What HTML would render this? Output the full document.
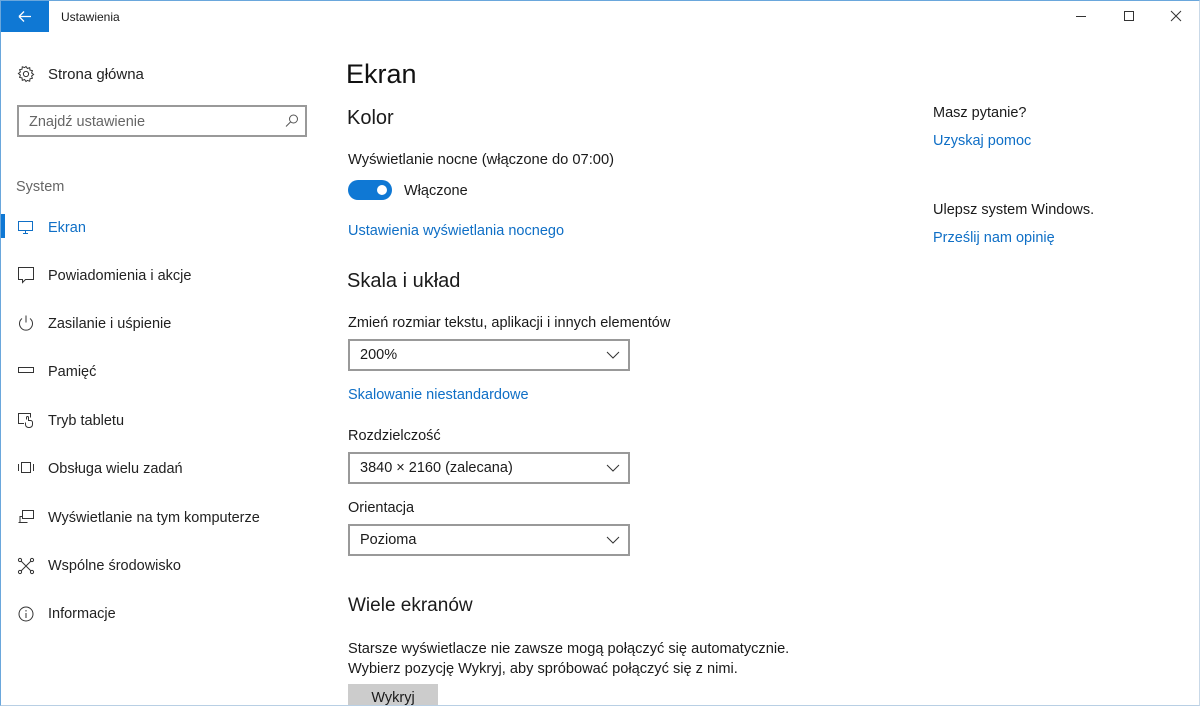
<!DOCTYPE html>
<html><head><meta charset="utf-8"><style>
*{margin:0;padding:0;box-sizing:border-box}
body{width:1200px;height:708px;overflow:hidden;background:#fff;font-family:"Liberation Sans",sans-serif;color:#1a1a1a;position:relative}
.frame{position:absolute;left:0;top:0;width:1200px;height:706px;border:1px solid #6aa7dc;border-right-color:#c9d9e8;border-bottom-color:#b8cfe4}
.abs{position:absolute;white-space:nowrap}
div.abs{padding-top:2px}
.back{position:absolute;left:1px;top:1px;width:48px;height:31px;background:#0f78d4}
.nav{font-size:14.5px;color:#222}
.blue{color:#0f6fc6}
.ic{position:absolute;left:17px}
.dd{position:absolute;left:348px;width:282px;height:32px;border:2px solid #999;font-size:14.5px;padding:6px 10px}
.dd svg{position:absolute;right:8px;top:9px}
</style></head><body>
<div class="frame"></div>
<div class="back"><svg width="48" height="31"><path d="M18 15.5h12M18 15.5l5-5M18 15.5l5 5" stroke="#fff" stroke-width="1.3" fill="none"/></svg></div>
<div class="abs" style="left:61px;top:8px;font-size:12px">Ustawienia</div>
<svg class="abs" style="left:1070px;top:8px" width="120" height="18"><path d="M6 8.5h10" stroke="#333"/><path d="M54.5 3.5h9v9h-9z" stroke="#333" fill="none"/><path d="M101 3l10 10M111 3l-10 10" stroke="#333"/></svg>

<svg class="ic" style="top:65px" width="18" height="18" viewBox="0 0 18 18"><circle cx="9" cy="9" r="2.6" fill="none" stroke="#333"/><path d="M9 1.5l1.4 2 2.3-.8.3 2.4 2.4.5-.8 2.3 2 1.6-2 1.5.8 2.3-2.4.5-.3 2.4-2.3-.8L9 16.5l-1.4-2-2.3.8-.3-2.4-2.4-.5.8-2.3-2-1.6 2-1.5-.8-2.3 2.4-.5.3-2.4 2.3.8z" fill="none" stroke="#333" stroke-width="1"/></svg>
<div class="abs nav" style="left:48px;top:64px;font-size:15px">Strona główna</div>
<div class="abs" style="left:17px;top:105px;width:290px;height:32px;border:2px solid #999"></div>
<div class="abs" style="left:29px;top:112px;font-size:14.5px;color:#666">Znajdź ustawienie</div>
<svg class="abs" style="left:284px;top:113px" width="16" height="16"><circle cx="9.5" cy="6" r="4" fill="none" stroke="#555"/><path d="M6.5 9L2 13.5" stroke="#555"/></svg>
<div class="abs" style="left:16px;top:177px;font-size:14.5px;color:#666">System</div>
<div class="abs" style="left:1px;top:214px;width:4px;height:24px;background:#0f78d4"></div>

<svg class="ic" style="top:219px" width="18" height="16"><path d="M1.5 2.5h14v9h-14zM6 14.5h5M8.5 11.5v3" stroke="#0f6fc6" fill="none"/></svg>
<div class="abs nav blue" style="left:48px;top:218px">Ekran</div>
<svg class="ic" style="top:266px" width="18" height="19"><path d="M1.5 1.5h15v12h-8l-3 3v-3h-4z" stroke="#333" fill="none"/></svg>
<div class="abs nav" style="left:48px;top:266px">Powiadomienia i akcje</div>
<svg class="ic" style="top:314px" width="18" height="19"><path d="M5 4.5a6.5 6.5 0 1 0 8 0M9 1.5v7" stroke="#333" fill="none"/></svg>
<div class="abs nav" style="left:48px;top:314px">Zasilanie i uśpienie</div>
<svg class="ic" style="top:366px" width="18" height="10"><path d="M1.5 1.5h15v5h-15z" stroke="#333" fill="none"/></svg>
<div class="abs nav" style="left:48px;top:362px">Pamięć</div>
<svg class="ic" style="top:411px" width="18" height="18"><path d="M7 12.5H1.5v-10h12v4" stroke="#333" fill="none"/><path d="M9.5 8.5v-2a1 1 0 0 1 2 0v3h2a2 2 0 0 1 2 2v2a3 3 0 0 1-3 3h-1a3 3 0 0 1-3-3v-2" stroke="#333" fill="none"/></svg>
<div class="abs nav" style="left:48px;top:411px">Tryb tabletu</div>
<svg class="ic" style="top:461px" width="18" height="14"><path d="M4.5 1.5h9v10h-9zM1.5 3v7M16.5 3v7" stroke="#333" fill="none"/></svg>
<div class="abs nav" style="left:48px;top:459px">Obsługa wielu zadań</div>
<svg class="ic" style="top:509px" width="18" height="16"><path d="M5.5 1.5h11v8h-11zM1.5 13.5h9M3 13.5v-6h2.5" stroke="#333" fill="none"/></svg>
<div class="abs nav" style="left:48px;top:508px">Wyświetlanie na tym komputerze</div>
<svg class="ic" style="top:557px" width="18" height="18"><path d="M3 3l12 12M15 3L3 15" stroke="#333"/><circle cx="3" cy="3" r="1.6" fill="#fff" stroke="#333"/><circle cx="15" cy="3" r="1.6" fill="#fff" stroke="#333"/><circle cx="3" cy="15" r="1.6" fill="#fff" stroke="#333"/><circle cx="15" cy="15" r="1.6" fill="#fff" stroke="#333"/></svg>
<div class="abs nav" style="left:48px;top:556px">Wspólne środowisko</div>
<svg class="ic" style="top:605px" width="18" height="18"><circle cx="9" cy="9" r="7" fill="none" stroke="#333"/><path d="M9 8v5M9 5v1.5" stroke="#333"/></svg>
<div class="abs nav" style="left:48px;top:604px">Informacje</div>

<div class="abs" style="left:346px;top:57px;font-size:27px;color:#111">Ekran</div>
<div class="abs" style="left:347px;top:105px;font-size:20px">Kolor</div>
<div class="abs" style="left:348px;top:150px;font-size:14.7px">Wyświetlanie nocne (włączone do 07:00)</div>
<div class="abs" style="left:348px;top:180px;width:44px;height:20px;border-radius:10px;background:#0f78d4"><div style="position:absolute;right:5px;top:5px;width:10px;height:10px;border-radius:5px;background:#fff"></div></div>
<div class="abs" style="left:404px;top:181px;font-size:14.5px">Włączone</div>
<div class="abs blue" style="left:348px;top:221px;font-size:14.5px">Ustawienia wyświetlania nocnego</div>
<div class="abs" style="left:347px;top:268px;font-size:20px">Skala i układ</div>
<div class="abs" style="left:348px;top:313px;font-size:14.5px">Zmień rozmiar tekstu, aplikacji i innych elementów</div>
<div class="dd" style="top:339px">200%<svg width="14" height="10"><path d="M1 2l6 6 6-6" stroke="#333" fill="none"/></svg></div>
<div class="abs blue" style="left:348px;top:385px;font-size:14.5px">Skalowanie niestandardowe</div>
<div class="abs" style="left:348px;top:426px;font-size:14.5px">Rozdzielczość</div>
<div class="dd" style="top:452px">3840 × 2160 (zalecana)<svg width="14" height="10"><path d="M1 2l6 6 6-6" stroke="#333" fill="none"/></svg></div>
<div class="abs" style="left:348px;top:498px;font-size:14.5px">Orientacja</div>
<div class="dd" style="top:524px">Pozioma<svg width="14" height="10"><path d="M1 2l6 6 6-6" stroke="#333" fill="none"/></svg></div>
<div class="abs" style="left:348px;top:593px;font-size:19px">Wiele ekranów</div>
<div class="abs" style="left:348px;top:637px;font-size:14.6px;line-height:20px">Starsze wyświetlacze nie zawsze mogą połączyć się automatycznie.<br>Wybierz pozycję Wykryj, aby spróbować połączyć się z nimi.</div>
<div class="abs" style="left:348px;top:684px;width:90px;height:21px;background:#ccc;overflow:hidden;text-align:center;font-size:14.5px;padding-top:6px">Wykryj</div>

<div class="abs" style="left:933px;top:103px;font-size:14.5px">Masz pytanie?</div>
<div class="abs blue" style="left:933px;top:131px;font-size:14.5px">Uzyskaj pomoc</div>
<div class="abs" style="left:933px;top:200px;font-size:14.5px">Ulepsz system Windows.</div>
<div class="abs blue" style="left:933px;top:228px;font-size:14.5px">Prześlij nam opinię</div>
</body></html>
